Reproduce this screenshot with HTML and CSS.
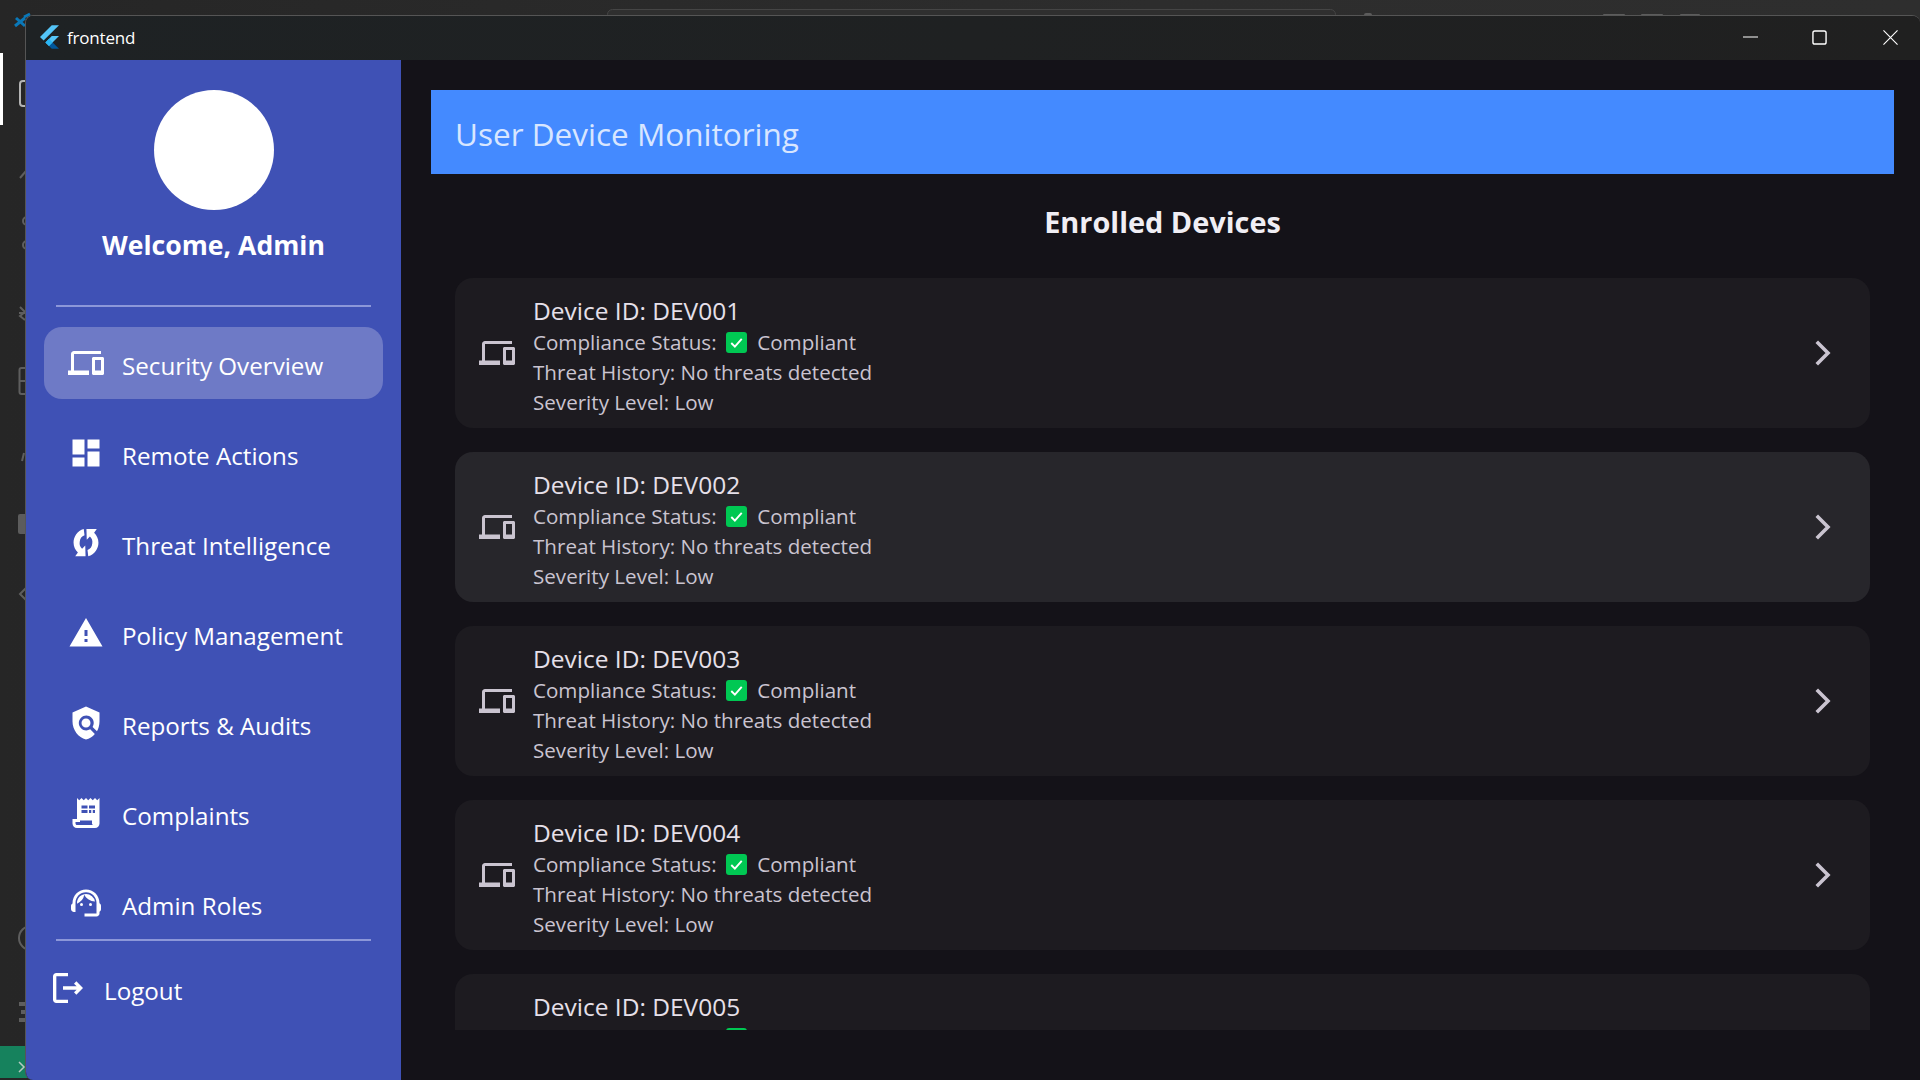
FILE: index.html
```html
<!DOCTYPE html>
<html lang="en">
<head>
<meta charset="utf-8">
<title>frontend</title>
<link rel="stylesheet" href="styles.css">
</head>
<body>
<svg class="sprites" width="0" height="0">
  <symbol id="i-devices" viewBox="0 0 24 24"><path d="M4 6h18V4H4c-1.100 0-2 .9-2 2v11H0v3h14v-3H4V6zm19 2h-6c-.55 0-1 .45-1 1v10c0 .55.45 1 1 1h6c.55 0 1-.45 1-1V9c0-.55-.45-1-1-1zm-1 9h-4v-7h4v7z"/></symbol>
  <symbol id="i-dash" viewBox="0 0 24 24"><path d="M3 13h8V3H3v10zm0 8h8v-6H3v6zm10 0h8V11h-8v10zm0-18v6h8V3h-8z"/></symbol>
  <symbol id="i-sync" viewBox="0 0 24 24"><g id="i-sync-half"><path d="M10.500 2.700C6.200 3.900 3.700 7.800 3.700 11.700c0 2.800 1.200 5 2.900 6.700l-1.800 2.400h6.900l-.2-7.200-2.100 2.200c-1.300-1.200-1.900-2.700-1.600-4.500C8 8.800 9.200 7.400 11 6.800z"/></g><use href="#i-sync-half" transform="rotate(180 12 11.750)"/></symbol>
  <symbol id="i-warn" viewBox="0 0 24 24"><path d="M1 21h22L12 2 1 21zm12-3h-2v-2h2v2zm0-4h-2v-4h2v4z"/></symbol>
  <symbol id="i-shield" viewBox="0 0 24 24"><path fill-rule="evenodd" d="M12 1 3 5v6c0 5.550 3.840 10.740 9 12 2.300-.56 4.350-1.900 5.900-3.700l-3.100-3.100c-1.900 1.200-4.500 1-6.100-.7-2-1.900-2-5.100 0-7 1.900-2 5.100-2 7 0 1.700 1.600 1.900 4.200.7 6.100l2.900 2.900C20.200 16.100 21 13.600 21 11V5l-9-4zM12 9a3 3 0 1 0 0 6 3 3 0 0 0 0-6z"/></symbol>
  <symbol id="i-receipt" viewBox="0 0 24 24"><path fill-rule="evenodd" d="M19.500 3.500 18 2l-1.500 1.500L15 2l-1.500 1.500L12 2l-1.500 1.500L9 2 7.500 3.500 6 2v14H3v3c0 1.660 1.340 3 3 3h12c1.660 0 3-1.340 3-3V2l-1.500 1.500zM9 7h4v2H9V7zm5 0h4v2h-4V7zM9 10h4v2H9v-2zm5 0h1.500v2H14v-2zm2.500 0H18v2h-1.500v-2zM8 17h8v2c0 .55.45 1 1 1H6c-.55 0-1-.45-1-1v-1h3v-1z"/></symbol>
  <symbol id="i-agent" viewBox="0 0 24 24"><path d="M21 12.220C21 6.730 16.740 3 12 3c-4.690 0-9 3.650-9 9.280-.6.34-1 .98-1 1.720v2c0 1.100.9 2 2 2h1v-6.100c0-3.870 3.130-7 7-7s7 3.130 7 7V19h-8v2h8c1.100 0 2-.9 2-2v-1.220c.59-.31 1-.92 1-1.640v-2.300c0-.7-.41-1.310-1-1.620z"/><circle cx="9" cy="13" r="1"/><circle cx="15" cy="13" r="1"/><path d="M18 11.030A6.040 6.040 0 0 0 12.050 6c-3.030 0-6.290 2.510-6.030 6.450a8.080 8.080 0 0 0 4.860-5.890c1.310 2.630 4 4.440 7.120 4.470z"/></symbol>
  <symbol id="i-logout" viewBox="0 0 24 24"><path d="M17 8l-1.400 1.400 1.600 1.600H9v2h8.200l-1.600 1.600L17 16l4-4-4-4zM5 5h7V3H5c-1.100 0-2 .9-2 2v14c0 1.100.9 2 2 2h7v-2H5V5z"/></symbol>
</svg>

<div class="desktop">
  <svg class="backdrop" viewBox="0 0 1920 1080">
    <rect class="bd-search" x="607.500" y="9.500" width="728" height="20" rx="5"/>
    <rect class="bd-fill" x="1603" y="14" width="22" height="3" rx="1"/>
    <rect class="bd-fill" x="1641" y="14" width="22" height="3" rx="1"/>
    <rect class="bd-fill" x="1680" y="14" width="20" height="3" rx="1"/>
    <rect class="bd-fill" x="1364" y="13" width="8" height="4" rx="2"/>
    <path class="bd-logo" d="M15 26 25 18M16 18l9 8M24 17l6-3"/>
    <rect class="bd-white" x="0" y="53" width="3" height="72"/>
    <rect class="bd-box" x="20" y="81" width="12" height="25" rx="3"/>
    <path class="bd-line" d="M20 178l6-7"/>
    <circle class="bd-line" cx="27" cy="221" r="4"/>
    <circle class="bd-line" cx="27" cy="245" r="4"/>
    <path class="bd-line" d="M20 307l5 5-5 4 5 4M19 313h6"/>
    <rect class="bd-line" x="19.500" y="368" width="12" height="26" rx="2"/>
    <path class="bd-line" d="M19.500 381h6"/>
    <path class="bd-line" d="M24 453l-2 8"/>
    <rect class="bd-fill" x="18" y="514" width="10" height="20" rx="2"/>
    <path class="bd-line" d="M26 588l-6 6 6 6"/>
    <circle class="bd-line" cx="31" cy="938" r="12"/>
    <path class="bd-gear" d="M19 1004h6M21 1012h4M19 1020h6"/>
    <rect class="bd-status" x="0" y="1046" width="30" height="32"/>
    <path class="bd-chev" d="M19 1062l5 5-5 5"/>
  </svg>
  <div class="window">
    <header class="titlebar">
      <svg class="flutter" viewBox="9.800 10.400 146.400 181.200"><path fill="#54c5f8" d="M37.700 128.900 9.800 101 100.400 10.400h55.800z"/><path fill="#54c5f8" d="M156.200 94h-55.800L51.600 142.800l27.900 27.900z"/><path fill="#01579b" d="M79.500 170.700l20.900 20.900h55.800l-48.800-48.800z"/><path fill="#29b6f6" d="M79.500 170.700l27.900-27.900-27.900-27.900-27.900 27.900z"/></svg>
      <span class="app-name">frontend</span>
      <div class="win-controls">
        <span class="win-btn"><svg class="win-min" viewBox="0 0 16 16"><path d="M0 7.500h16"/></svg></span>
        <span class="win-btn win-mid"><svg class="win-max" viewBox="0 0 16 16"><rect x="1" y="1" width="14" height="14" rx="2"/></svg></span>
        <span class="win-btn"><svg class="win-x" viewBox="0 0 16 16"><path d="M.5.500l15 15M15.500.500l-15 15"/></svg></span>
      </div>
    </header>
    <div class="app">
      <aside class="sidebar">
        <div class="avatar"></div>
        <div class="welcome">Welcome, Admin</div>
        <div class="rule rule-top"></div>
        <nav class="nav">
          <a class="nav-item active"><svg class="nav-icon"><use href="#i-devices"/></svg><span class="nav-label">Security Overview</span></a>
          <a class="nav-item"><svg class="nav-icon"><use href="#i-dash"/></svg><span class="nav-label">Remote Actions</span></a>
          <a class="nav-item"><svg class="nav-icon"><use href="#i-sync"/></svg><span class="nav-label">Threat Intelligence</span></a>
          <a class="nav-item"><svg class="nav-icon"><use href="#i-warn"/></svg><span class="nav-label">Policy Management</span></a>
          <a class="nav-item"><svg class="nav-icon"><use href="#i-shield"/></svg><span class="nav-label">Reports &amp; Audits</span></a>
          <a class="nav-item"><svg class="nav-icon"><use href="#i-receipt"/></svg><span class="nav-label">Complaints</span></a>
          <a class="nav-item"><svg class="nav-icon"><use href="#i-agent"/></svg><span class="nav-label">Admin Roles</span></a>
        </nav>
        <div class="rule"></div>
        <a class="logout"><svg class="logout-icon"><use href="#i-logout"/></svg><span class="nav-label">Logout</span></a>
      </aside>
      <main class="content">
        <div class="banner">User Device Monitoring</div>
        <h2 class="section-title">Enrolled Devices</h2>
        <div class="list">
          <article class="card"><svg class="card-icon"><use href="#i-devices"/></svg><div class="card-body"><div class="card-title">Device ID: DEV001</div><div class="card-line">Compliance Status: <span class="check"><svg viewBox="0 0 20 20"><path d="M4.500 10.500l3.800 3.800 7.200-8"/></svg></span> Compliant</div><div class="card-line">Threat History: No threats detected</div><div class="card-line">Severity Level: Low</div></div><svg class="chev" viewBox="0 0 24 24"><path d="M8.500 4.500 16 12l-7.500 7.500"/></svg></article>
          <article class="card hover"><svg class="card-icon"><use href="#i-devices"/></svg><div class="card-body"><div class="card-title">Device ID: DEV002</div><div class="card-line">Compliance Status: <span class="check"><svg viewBox="0 0 20 20"><path d="M4.500 10.500l3.800 3.800 7.200-8"/></svg></span> Compliant</div><div class="card-line">Threat History: No threats detected</div><div class="card-line">Severity Level: Low</div></div><svg class="chev" viewBox="0 0 24 24"><path d="M8.500 4.500 16 12l-7.500 7.500"/></svg></article>
          <article class="card"><svg class="card-icon"><use href="#i-devices"/></svg><div class="card-body"><div class="card-title">Device ID: DEV003</div><div class="card-line">Compliance Status: <span class="check"><svg viewBox="0 0 20 20"><path d="M4.500 10.500l3.800 3.800 7.200-8"/></svg></span> Compliant</div><div class="card-line">Threat History: No threats detected</div><div class="card-line">Severity Level: Low</div></div><svg class="chev" viewBox="0 0 24 24"><path d="M8.500 4.500 16 12l-7.500 7.500"/></svg></article>
          <article class="card"><svg class="card-icon"><use href="#i-devices"/></svg><div class="card-body"><div class="card-title">Device ID: DEV004</div><div class="card-line">Compliance Status: <span class="check"><svg viewBox="0 0 20 20"><path d="M4.500 10.500l3.800 3.800 7.200-8"/></svg></span> Compliant</div><div class="card-line">Threat History: No threats detected</div><div class="card-line">Severity Level: Low</div></div><svg class="chev" viewBox="0 0 24 24"><path d="M8.500 4.500 16 12l-7.500 7.500"/></svg></article>
          <article class="card"><svg class="card-icon"><use href="#i-devices"/></svg><div class="card-body"><div class="card-title">Device ID: DEV005</div><div class="card-line">Compliance Status: <span class="check"><svg viewBox="0 0 20 20"><path d="M4.500 10.500l3.800 3.800 7.200-8"/></svg></span> Compliant</div><div class="card-line">Threat History: No threats detected</div><div class="card-line">Severity Level: Low</div></div><svg class="chev" viewBox="0 0 24 24"><path d="M8.500 4.500 16 12l-7.500 7.500"/></svg></article>
        </div>
      </main>
    </div>
  </div>
</div>
</body>
</html>
```

FILE: styles.css
```css
* { box-sizing: border-box; }
html, body { margin: 0; height: 100%; overflow: hidden; }
body { font-family: "Open Sans", "Noto Sans", sans-serif; background: #2b2b2b; }
.sprites { position: absolute; }
.desktop { position: relative; width: 1920px; height: 1080px; overflow: hidden; background: linear-gradient(90deg, #262626, #2d2d2d 60%, #2e2e2e); padding: 15px 0 0 25px; display: flex; }

.backdrop { position: absolute; inset: 0; width: 1920px; height: 1080px; }
.bd-search { fill: #2f2f2f; stroke: #454545; }
.bd-fill { fill: #5c5c5c; }
.bd-logo { fill: none; stroke: #0a78b8; stroke-width: 3; }
.bd-white { fill: #fff; }
.bd-box { fill: none; stroke: #b4b4b4; stroke-width: 2; }
.bd-line { fill: none; stroke: #5e5e5e; stroke-width: 2; }
.bd-gear { fill: none; stroke: #5e5e5e; stroke-width: 4; }
.bd-status { fill: #16825d; }
.bd-chev { fill: none; stroke: #b6c9c2; stroke-width: 1.500; }

.window { position: relative; flex: 1; display: flex; flex-direction: column; border-top: 1px solid #555; border-left: 1px solid #555; border-radius: 8px 8px 0 8px; overflow: hidden; background: #141218; }
.titlebar { height: 44px; flex: none; background: linear-gradient(90deg, #1e2224, #202020); display: flex; align-items: center; padding: 0 0 2px 14px; color: #fff; }
.flutter { width: 19px; height: 24px; flex: none; }
.app-name { margin-left: 8px; font-size: 17px; letter-spacing: -.2px; }
.win-controls { margin-left: auto; display: flex; }
.win-btn { width: 60px; height: 42px; display: flex; align-items: center; justify-content: center; }
.win-mid { margin: 0 11px 0 9px; }
.win-btn svg { width: 15px; height: 15px; fill: none; stroke: #fff; }
.win-min { stroke-width: 1.100; }
.win-max { stroke-width: 1.500; }
.win-x { stroke-width: 1.200; }

.app { flex: 1; display: flex; min-height: 0; }
.sidebar { width: 375px; flex: none; background: #3f51b5; display: flex; flex-direction: column; align-items: center; padding-top: 30px; color: #fff; }
.avatar { width: 120px; height: 120px; border-radius: 50%; background: #fff; flex: none; }
.welcome { margin-top: 18px; font-size: 26.600px; font-weight: 700; line-height: 34px; }
.rule { width: 315px; height: 2px; background: #8c97d9; flex: none; }
.rule-top { margin-top: 43px; }
.nav { width: 100%; padding: 20px 18px 0; display: flex; flex-direction: column; gap: 18px; }
.nav-item { height: 72px; display: flex; align-items: center; padding-left: 24px; gap: 18px; border-radius: 18px; flex: none; }
.nav-item.active { background: #6e7ac6; }
.nav-icon { width: 36px; height: 36px; fill: #fff; flex: none; }
.nav-label { font-size: 24.200px; padding-top: 4px; }
.logout { width: 100%; display: flex; align-items: center; gap: 16px; padding-left: 22px; margin-top: 27px; }
.logout-icon { width: 40px; height: 40px; fill: #fff; flex: none; }

.content { flex: 1; min-width: 0; padding: 30px 26px 0 30px; display: flex; flex-direction: column; }
.banner { height: 84px; flex: none; background: #448aff; color: #d8e6ff; font-size: 31.500px; display: flex; align-items: center; padding: 3px 0 0 24px; }
.section-title { margin: 0; height: 104px; flex: none; display: flex; align-items: center; justify-content: center; padding-bottom: 10px; color: #f0eef4; font-size: 28.900px; font-weight: 700; }
.list { height: 752px; flex: none; padding: 0 24px; display: flex; flex-direction: column; gap: 24px; overflow: hidden; }
.card { height: 150px; flex: none; border-radius: 18px; background: #1d1b20; display: flex; align-items: center; padding: 0 30px 0 24px; }
.card.hover { background: #27262b; }
.card-icon { width: 36px; height: 36px; fill: #cac4d0; flex: none; }
.card-body { margin-left: 18px; padding-top: 4px; flex: 1; color: #cac4d0; }
.card-title { color: #e6e0e9; font-size: 24.500px; line-height: 33px; }
.card-line { font-size: 20.600px; line-height: 30px; display: flex; align-items: center; white-space: pre; }
.check { width: 21px; height: 21px; margin: 2px 5px 0 4px; border-radius: 3px; background: #00c853; display: inline-flex; align-items: center; justify-content: center; }
.check svg { width: 19px; height: 19px; fill: none; stroke: #fff; stroke-width: 2; }
.chev { width: 36px; height: 36px; fill: none; stroke: #cac4d0; stroke-width: 2.400; flex: none; }
```
